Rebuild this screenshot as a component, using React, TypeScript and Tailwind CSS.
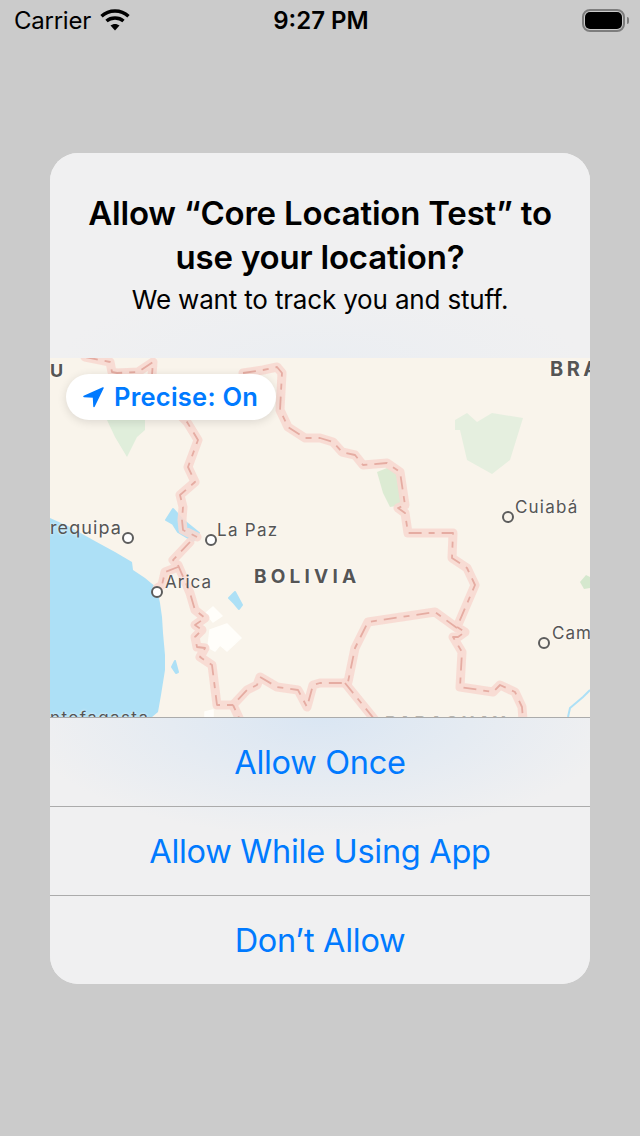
import React from 'react';

const font = "font-['Inter','Noto_Sans',sans-serif]";

const borders = [
  'M85 357 L110 362 L112 372 L117 373 L138 372 L153 362 L152 375 L160 395 L187 422 L198 440 L188 467 L195 482 L180 495 L183 507 L182 520 L183 530 L197 537',
  'M243 373 L263 370 L277 367 L282 373 L280 410 L288 427 L305 438 L320 438 L333 442 L342 452 L355 455 L363 465 L387 463 L400 472 L405 505 L398 508 L405 513 L408 533 L453 533 L452 558 L467 568 L475 585 L457 627 L465 632 L458 637 L453 637 L462 652 L460 687 L493 692 L500 685 L515 692 L522 707 L523 720',
  'M457 628 L435 612 L368 622 L355 648 L348 682 L343 683 L320 683 L313 685 L307 707 L298 690 L277 687 L260 677 L257 685 L247 690 L233 705 L240 720',
  'M345 683 L375 720',
  'M190 542 L173 560 L178 567 L165 572 L162 585 L157 588',
  'M178 565 L190 593 L195 610 L205 618 L195 625 L202 630 L195 637 L197 647 L205 648 L200 657 L212 665 L217 705 L233 705',
];

const labels = [
  { text: 'requipa', cls: 'left-0 top-[161px] text-[18px] tracking-[1.1px]' },
  { text: 'La Paz', cls: 'left-[167px] top-[164px] text-[17px] tracking-[1.3px]' },
  { text: 'Arica', cls: 'left-[115px] top-[216px] text-[17px] tracking-[1px]' },
  { text: 'Cuiabá', cls: 'left-[465px] top-[141px] text-[17px] tracking-[1.2px]' },
  { text: 'Cam', cls: 'left-[502px] top-[267px] text-[17px] tracking-[1px]' },
  { text: 'ntofagasta', cls: 'left-0 top-[352px] text-[17px] tracking-[1.4px]' },
  { text: 'BOLIVIA', cls: 'left-[204px] top-[209px] text-[19px] font-bold tracking-[4.2px]' },
  { text: 'U', cls: 'left-0 top-[4px] text-[18px] font-bold' },
  { text: 'BRA', cls: 'left-[500px] top-[1px] text-[20px] font-bold tracking-[3.5px]' },
  { text: 'PARAGUAY', cls: 'left-[335px] top-[356px] text-[18px] font-bold tracking-[3px] opacity-40' },
];

function MapArt() {
  return (
    <svg viewBox="50 358 540 359" className="absolute inset-0 w-full h-full">
      <rect x="50" y="358" width="540" height="359" fill="#F9F4EB" />
      {/* ocean */}
      <path
        d="M50 518 L70 527 L93 540 L115 552 L132 562 L133 570 L145 578 L157 588 L160 603 L162 617 L163 633 L165 655 L165 670 L161 695 L158 712 L152 717 L50 717 Z"
        fill="#ADE0F6"
      />
      {/* parks */}
      <g fill="#E0EEDB">
        <path d="M107 405 L145 405 L145 430 L137 437 L127 457 L115 437 L107 420 Z" />
        <path d="M455 420 L467 413 L477 422 L492 413 L523 418 L510 460 L492 474 L467 460 L460 430 L455 430 Z" fill="#E5EFDF" />
        <path d="M377 472 L387 468 L400 475 L403 505 L390 507 L383 493 Z" fill="#DCEBD3" />
        <path d="M580 582 L586 575 L590 577 L590 588 L584 589 Z" fill="#D5E8CE" />
      </g>
      {/* lakes */}
      <g fill="#ADE0F6" stroke="#ADE0F6" strokeWidth="2" strokeLinejoin="round">
        <path d="M166 520 L173 509 L183 520 L199 533 L193 541 L178 532 L173 524 Z" />
        <path d="M229 598 L235 592 L242 605 L239 609 L234 603 Z" />
        <path d="M172 667 L175 661 L178 672 L176 673 Z" />
      </g>
      <path d="M568 717 L570 708 L583 697 L590 690" fill="none" stroke="#ADE0F6" strokeWidth="2" />
      {/* salt flats */}
      <g fill="#FFFEFA" stroke="#FFFEFA" strokeWidth="1.5" strokeLinejoin="round">
        <path d="M206 613 L213 607 L222 616 L213 622 Z" />
        <path d="M210 630 L227 624 L241 638 L227 651 L220 645 L215 651 L208 647 Z" />
        <path d="M205 712 L213 710 L213 717 L205 717 Z" />
      </g>
      {/* borders */}
      <g fill="none" strokeLinejoin="round" strokeLinecap="round">
        {borders.map((d) => (
          <path key={d} d={d} stroke="#F7D9D1" strokeOpacity="0.9" strokeWidth="9" />
        ))}
        {borders.map((d) => (
          <path key={d + 'd'} d={d} stroke="#E5ACA2" strokeWidth="1.8" strokeDasharray="13 7 6 7" strokeLinecap="butt" />
        ))}
      </g>
      {/* city dots */}
      <g fill="#fff" stroke="#5C5C5C" strokeWidth="2">
        <circle cx="128" cy="538" r="5" />
        <circle cx="211" cy="540" r="5" />
        <circle cx="157" cy="592" r="5" />
        <circle cx="508" cy="517" r="5" fill="#F9F4EB" />
        <circle cx="544" cy="643" r="5" fill="#F9F4EB" />
      </g>
    </svg>
  );
}

function Wifi() {
  return (
    <svg width="30" height="24" viewBox="0 0 30 24" fill="none" stroke="#000" strokeWidth="3.4">
      <path d="M1.5 8.2 C9 1.2 21 1.2 28.5 8.2" />
      <path d="M6.5 13 C11 9 19 9 23.5 13" />
      <path d="M15 22.5 L10.5 17.5 C13 15.4 17 15.4 19.5 17.5 Z" fill="#000" stroke="none" />
    </svg>
  );
}

function Battery() {
  return (
    <div className="flex items-center gap-[2px]">
      <div className="w-[43px] h-[23px] rounded-[8px] border-2 border-[#7d7d7d] p-[1px]">
        <div className="w-full h-full rounded-[5px] bg-black" />
      </div>
      <div className="w-[2px] h-[7px] rounded-r-sm bg-[#7d7d7d]" />
    </div>
  );
}

export default function App() {
  const buttons = ['Allow Once', 'Allow While Using App', 'Don’t Allow'];

  return (
    <div className={`w-[640px] h-[1136px] bg-[#CBCBCB] overflow-hidden ${font}`}>
      {/* Status bar */}
      <div className="h-10 pl-[14px] pr-[11px] grid grid-cols-3 items-center text-black text-[24px]">
        <div className="flex items-center gap-[9px]">
          <span className="pt-[1px] tracking-[-0.25px]">Carrier</span>
          <Wifi />
        </div>
        <div className="text-center font-semibold whitespace-nowrap pt-[1px] pr-[1px]">9:27 PM</div>
        <div className="flex justify-end">
          <Battery />
        </div>
      </div>

      {/* Alert */}
      <div className="mt-[113px] mx-[50px] h-[831px] rounded-[28px] overflow-hidden bg-[#F0F0F0] flex flex-col">
        <div className="h-[205px] pt-[38px] px-4 text-center text-black bg-[radial-gradient(ellipse_260px_70px_at_50%_100%,#EBEEF2,#F0F0F1)]">
          <h2 className="text-[33px] leading-[44px] font-semibold tracking-[-0.2px]">
            Allow “Core Location Test” to
            <br />
            use your location?
          </h2>
          <p className="mt-[5px] text-[26px] leading-[32px] tracking-[-0.17px]">We want to track you and stuff.</p>
        </div>

        <div className="relative h-[359px] overflow-hidden text-[#555555] [text-shadow:0_0_3px_#fff]">
          <MapArt />
          {labels.map((l) => (
            <span key={l.text} className={`absolute leading-none whitespace-nowrap ${l.cls}`}>
              {l.text}
            </span>
          ))}
          <div className="absolute left-4 top-4 h-[46px] w-[210px] rounded-full bg-white shadow-[0_2px_10px_rgba(0,0,0,0.12)] flex items-center pl-[17px] gap-[10px] [text-shadow:none]">
            <svg width="21" height="21" viewBox="0 0 21 21" fill="#007AFF" stroke="#007AFF" strokeWidth="1.5" strokeLinejoin="round">
              <path d="M20 1 L1 9.5 L10.5 10 L11 19.5 Z" />
            </svg>
            <span className="pt-[1px] text-[#007AFF] text-[25.5px] font-semibold tracking-[0.25px] whitespace-nowrap">Precise: On</span>
          </div>
        </div>

        <div className="flex-1 flex flex-col bg-[radial-gradient(ellipse_300px_120px_at_50%_0%,#DAE6F3,#F0F0F1)]">
          {buttons.map((b) => (
            <button key={b} className="h-[89px] pt-[2px] border-t-[1px] border-[#ABABAB] text-[#007AFF] text-[32.5px] tracking-[-0.3px] flex items-center justify-center">
              {b}
            </button>
          ))}
        </div>
      </div>
    </div>
  );
}
